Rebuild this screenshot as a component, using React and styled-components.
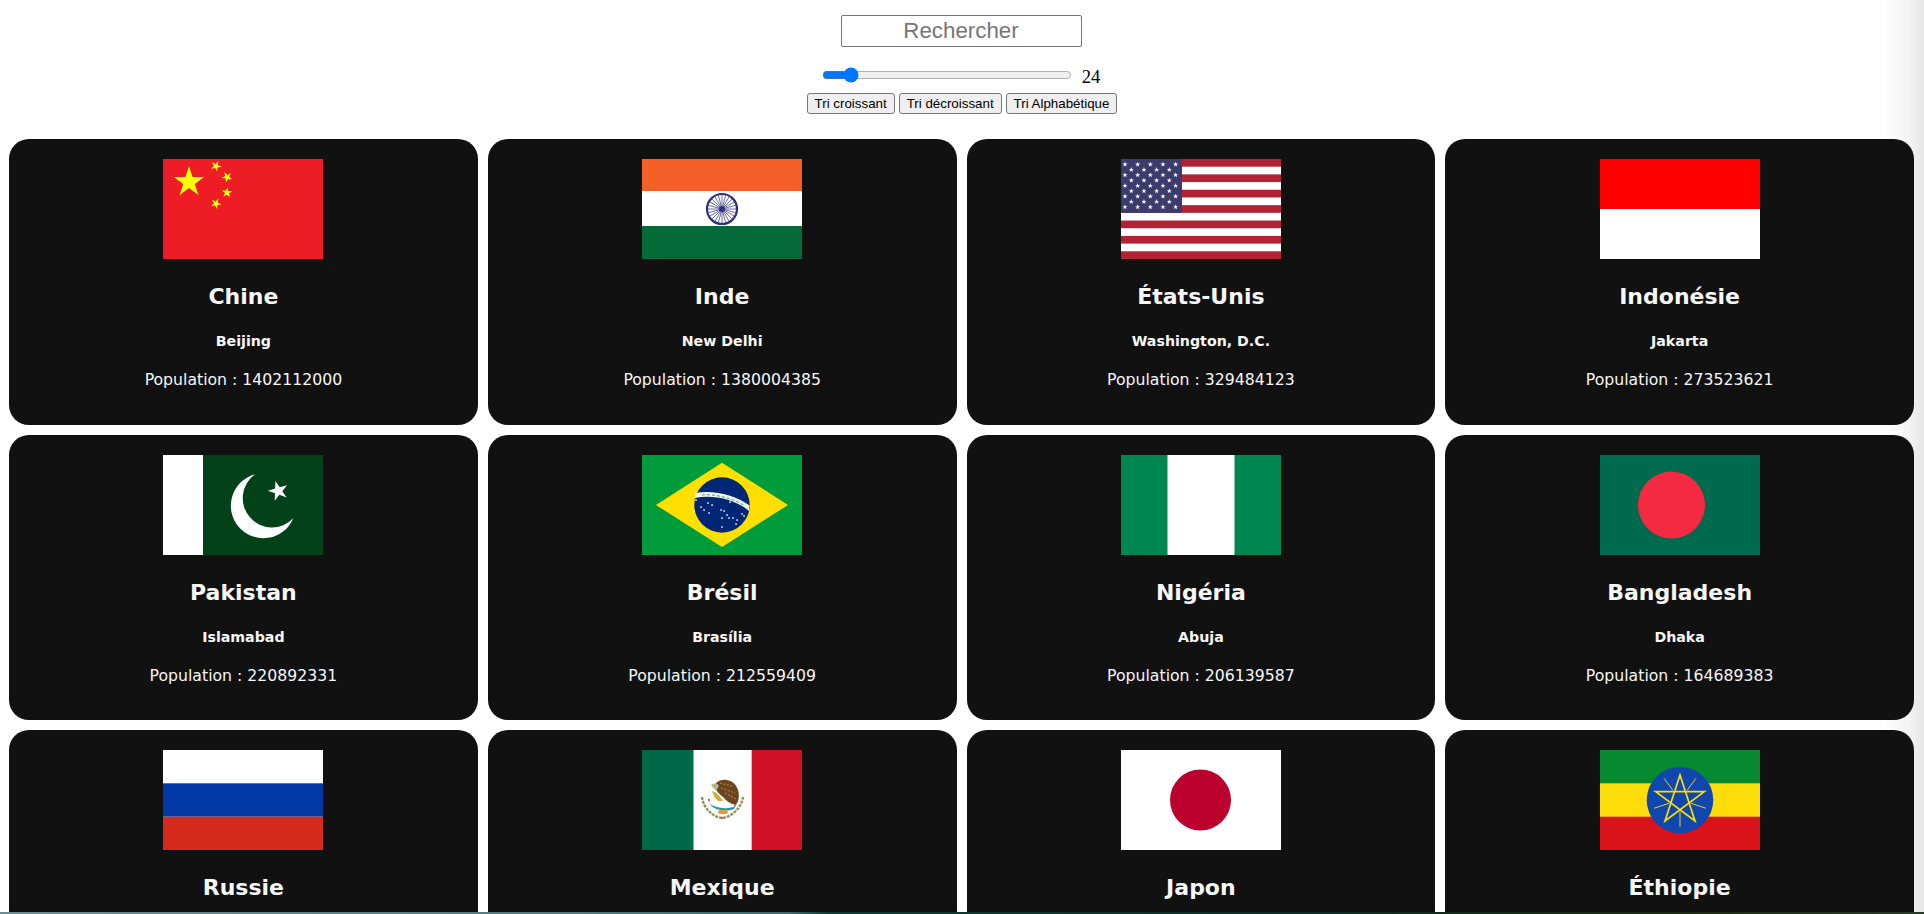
import React from "react";
import styled, { createGlobalStyle } from "styled-components";

const GlobalStyle = createGlobalStyle`
  html, body {
    margin: 0;
    height: 100%;
    overflow: hidden;
  }
  body {
    background: linear-gradient(to right, #ffffff 1884px, #f4f4f4 1908px, #e6e6e6 1924px);
    font-family: "Liberation Serif", serif;
  }
`;

const starPoints = (cx, cy, r, rot = 0) => {
  const pts = [];
  for (let i = 0; i < 10; i++) {
    const rad = i % 2 === 0 ? r : r * 0.382;
    const a = ((rot - 90 + i * 36) * Math.PI) / 180;
    pts.push(`${(cx + rad * Math.cos(a)).toFixed(2)},${(cy + rad * Math.sin(a)).toFixed(2)}`);
  }
  return pts.join(" ");
};

const FlagSvg = styled.svg`
  display: block;
  width: 160px;
  height: 100px;
  flex: none;
`;

const Flag = ({ children }) => <FlagSvg viewBox="0 0 160 100">{children}</FlagSvg>;

const China = () => (
  <Flag>
    <rect width="160" height="100" fill="#ee1c25" />
    <polygon points={starPoints(26, 23, 16)} fill="#ffff00" />
    <polygon points={starPoints(53, 7, 5.6, 25)} fill="#ffff00" />
    <polygon points={starPoints(64, 18, 5.6, 45)} fill="#ffff00" />
    <polygon points={starPoints(64, 33.5, 5.6, 5)} fill="#ffff00" />
    <polygon points={starPoints(53, 44.5, 5.6, 25)} fill="#ffff00" />
  </Flag>
);

const India = () => (
  <Flag>
    <rect width="160" height="100" fill="#ffffff" />
    <rect width="160" height="32" fill="#f46027" />
    <rect y="67" width="160" height="33" fill="#046a38" />
    <circle cx="80" cy="50" r="15" fill="none" stroke="#2b2f7c" strokeWidth="2.2" />
    <circle cx="80" cy="50" r="2.8" fill="#2b2f7c" />
    {Array.from({ length: 24 }).map((_, i) => {
      const a = (i * 15 * Math.PI) / 180;
      return (
        <line
          key={i}
          x1="80"
          y1="50"
          x2={80 + 14 * Math.cos(a)}
          y2={50 + 14 * Math.sin(a)}
          stroke="#2b2f7c"
          strokeWidth="0.7"
        />
      );
    })}
  </Flag>
);

const Usa = () => {
  const rows = Array.from({ length: 9 });
  return (
    <Flag>
      <rect width="160" height="100" fill="#ffffff" />
      {Array.from({ length: 7 }).map((_, i) => (
        <rect key={i} y={(i * 200) / 13} width="160" height={100 / 13} fill="#b22234" />
      ))}
      <rect width="61" height="53.85" fill="#3c3b6e" />
      {rows.map((_, r) =>
        Array.from({ length: r % 2 === 0 ? 5 : 4 }).map((_, c) => (
          <polygon
            key={`${r}-${c}`}
            points={starPoints((r % 2 === 0 ? 4 : 10.3) + c * 12.65, 5.4 + r * 5.33, 2.7)}
            fill="#ffffff"
          />
        ))
      )}
    </Flag>
  );
};

const Indonesia = () => (
  <Flag>
    <rect width="160" height="100" fill="#ffffff" />
    <rect width="160" height="50" fill="#ff0000" />
  </Flag>
);

const Pakistan = () => (
  <Flag>
    <rect width="160" height="100" fill="#ffffff" />
    <rect x="40" width="120" height="100" fill="#034119" />
    <path d="M92 19.3 A32.5 32.5 0 1 0 130.3 63.3 A29.3 29.3 0 1 1 92 19.3 Z" fill="#ffffff" />
    <polygon points={starPoints(115.3, 36, 10.5, -16)} fill="#ffffff" />
  </Flag>
);

const brazilStars = [
  [54, 45], [66, 48], [59, 52], [62, 55], [67, 58], [70, 50], [52, 56], [79, 55], [82, 56],
  [85, 60], [80, 63], [87, 63], [91, 63], [95, 65], [100, 59], [102, 61], [80, 72], [94, 69],
  [88, 47],
];

const Brazil = () => (
  <Flag>
    <rect width="160" height="100" fill="#009c3b" />
    <polygon points="14,50 80,7.7 146,50 80,92" fill="#ffdf00" />
    <circle cx="80" cy="50" r="27.7" fill="#002776" />
    <path d="M53 43 C70 39.5 93 44 107 56 L107.5 50.5 C93 39.5 70 34.5 53.5 38 Z" fill="#f2f4f2" />
    <path d="M60 40 C72 38.8 90 42.5 103 51" fill="none" stroke="#4aa56a" strokeWidth="1" strokeDasharray="3 2" />
    {brazilStars.map(([x, y]) => (
      <rect key={`${x}-${y}`} x={x - 0.7} y={y - 0.7} width="1.5" height="1.5" fill="#ffffff" />
    ))}
  </Flag>
);

const Nigeria = () => (
  <Flag>
    <rect width="160" height="100" fill="#008751" />
    <rect x="46.5" width="67" height="100" fill="#ffffff" />
  </Flag>
);

const Bangladesh = () => (
  <Flag>
    <rect width="160" height="100" fill="#006a4e" />
    <circle cx="71.5" cy="50" r="33.5" fill="#f42a41" />
  </Flag>
);

const Russia = () => (
  <Flag>
    <rect width="160" height="100" fill="#ffffff" />
    <rect y="33.3" width="160" height="33.4" fill="#0039a6" />
    <rect y="66.7" width="160" height="33.3" fill="#d52b1e" />
  </Flag>
);

const Mexico = () => (
  <Flag>
    <rect width="160" height="100" fill="#ffffff" />
    <rect width="51.5" height="100" fill="#006847" />
    <rect x="109.7" width="50.3" height="100" fill="#ce1126" />
    <path d="M74 33 C80 27 93 29 96 40 C98 47 96 52 94 55 C89 54 84 51 81 47 C77 44 72 40 74 33 Z" fill="#6b4420" />
    <path d="M78 33 L90 36 M79 38 L93 43 M83 43 L94 49" stroke="#a8763c" strokeWidth="1.3" strokeDasharray="2 1.5" />
    <path d="M69 35 C72 33 75 33 77 36 L74 41 Z" fill="#b9b48a" />
    <path d="M70 41 C74 42 78 46 81 51 L76 51 C73 48 71 45 70 41 Z" fill="#d8a838" />
    <path d="M60 47 C61 57 70 67 80 68 C90 67 100 57 101 47" fill="none" stroke="#8c9a4c" strokeWidth="2.4" strokeDasharray="3 1" />
    <path d="M67 53 C72 58 86 60 94 56 L92 59 C84 62 72 61 67 53 Z" fill="#1f9aa8" />
    <ellipse cx="81" cy="62" rx="5" ry="2.2" fill="#e09a3a" />
    <circle cx="67" cy="50" r="1.2" fill="#e0506a" />
    <circle cx="93" cy="55" r="1.2" fill="#e0506a" />
    <circle cx="80" cy="68" r="1.2" fill="#e0506a" />
  </Flag>
);

const Japan = () => (
  <Flag>
    <rect width="160" height="100" fill="#ffffff" />
    <circle cx="79.5" cy="50" r="30.5" fill="#bc002d" />
  </Flag>
);

const Ethiopia = () => (
  <Flag>
    <rect width="160" height="100" fill="#fcdd09" />
    <rect width="160" height="33.3" fill="#078930" />
    <rect y="66.7" width="160" height="33.3" fill="#da121a" />
    <circle cx="80" cy="50" r="33.3" fill="#0f47af" />
    <polygon
      points="80,25 95,70.9 55.7,41.7 104.3,41.7 65,70.9"
      fill="none"
      stroke="#fcdd09"
      strokeWidth="1.7"
    />
    <path
      d="M64 28.3 L72.7 40 M96 28.3 L87.3 40 M106 58.3 L91 53.3 M54 58.3 L69 53.3 M80 76.7 L80 61.7"
      stroke="#e6cf2a"
      strokeWidth="1"
    />
  </Flag>
);

const countries = [
  { name: "Chine", capital: "Beijing", population: 1402112000, flag: China },
  { name: "Inde", capital: "New Delhi", population: 1380004385, flag: India },
  { name: "États-Unis", capital: "Washington, D.C.", population: 329484123, flag: Usa },
  { name: "Indonésie", capital: "Jakarta", population: 273523621, flag: Indonesia },
  { name: "Pakistan", capital: "Islamabad", population: 220892331, flag: Pakistan },
  { name: "Brésil", capital: "Brasília", population: 212559409, flag: Brazil },
  { name: "Nigéria", capital: "Abuja", population: 206139587, flag: Nigeria },
  { name: "Bangladesh", capital: "Dhaka", population: 164689383, flag: Bangladesh },
  { name: "Russie", capital: "Moscou", population: 144104080, flag: Russia },
  { name: "Mexique", capital: "Mexico", population: 128932753, flag: Mexico },
  { name: "Japon", capital: "Tokyo", population: 125836021, flag: Japan },
  { name: "Éthiopie", capital: "Addis-Abeba", population: 114963583, flag: Ethiopia },
];

const Header = styled.header`
  display: flex;
  flex-direction: column;
  align-items: center;
  padding-top: 15px;
`;

const SearchInput = styled.input`
  box-sizing: border-box;
  width: 241px;
  height: 32px;
  margin-right: 2px;
  padding: 0 4px;
  border: 1px solid #767676;
  border-radius: 2px;
  background: transparent;
  font-family: "Liberation Sans", Arial, sans-serif;
  font-size: 22.3px;
  text-align: center;
  &::placeholder {
    color: #757575;
  }
`;

const SliderRow = styled.div`
  display: flex;
  align-items: center;
  height: 24px;
  margin-top: 16px;
  margin-right: 2px;
  gap: 10px;
`;

const Slider = styled.input`
  width: 250px;
  margin: 0;
  accent-color: #0075ff;
`;

const SliderValue = styled.span`
  font-family: "Liberation Serif", serif;
  font-size: 18.6px;
  line-height: 24px;
  padding-top: 4px;
  color: #000;
`;

const SortRow = styled.div`
  display: flex;
  gap: 4px;
  margin-top: 6px;
`;

const SortButton = styled.button`
  box-sizing: border-box;
  height: 21px;
  padding: 0 7px;
  border: 1px solid #767676;
  border-radius: 3px;
  background: #efefef;
  color: #000;
  font-family: "Liberation Sans", Arial, sans-serif;
  font-size: 13.33px;
`;

const Grid = styled.main`
  display: grid;
  grid-template-columns: repeat(4, 1fr);
  gap: 10px;
  margin-top: 25px;
  padding: 0 10px 10px 9px;
`;

const Card = styled.article`
  display: flex;
  flex-direction: column;
  align-items: center;
  padding: 20px 10px 34.5px;
  border-radius: 20px;
  background: #111111;
  color: #f7f7f7;
  font-family: "DejaVu Sans", sans-serif;
  text-align: center;
`;

const Name = styled.h2`
  margin: 24px 0 0;
  font-size: 22px;
  line-height: 28px;
  font-weight: 700;
`;

const Capital = styled.h4`
  margin: 21px 0 0;
  font-size: 14.2px;
  line-height: 18px;
  font-weight: 700;
`;

const Population = styled.p`
  margin: 20px 0 0;
  font-size: 15.7px;
  line-height: 20px;
`;

const WindowEdge = styled.div`
  position: fixed;
  left: 0;
  right: 0;
  bottom: 0;
  height: 2.5px;
  background: linear-gradient(
    to right,
    #6f8d90 0%,
    #54787c 30%,
    #3e6a6c 41%,
    #123a32 43%,
    #0f2a22 70%,
    #1e2a12 88%,
    #2a3a2a 100%
  );
`;

export default function App() {
  return (
    <>
      <GlobalStyle />
      <Header>
        <SearchInput type="text" placeholder="Rechercher" />
        <SliderRow>
          <Slider type="range" min="1" max="250" defaultValue="24" />
          <SliderValue>24</SliderValue>
        </SliderRow>
        <SortRow>
          <SortButton>Tri croissant</SortButton>
          <SortButton>Tri décroissant</SortButton>
          <SortButton>Tri Alphabétique</SortButton>
        </SortRow>
      </Header>
      <Grid>
        {countries.map((c) => (
          <Card key={c.name}>
            <c.flag />
            <Name>{c.name}</Name>
            <Capital>{c.capital}</Capital>
            <Population>Population : {c.population}</Population>
          </Card>
        ))}
      </Grid>
      <WindowEdge />
    </>
  );
}
